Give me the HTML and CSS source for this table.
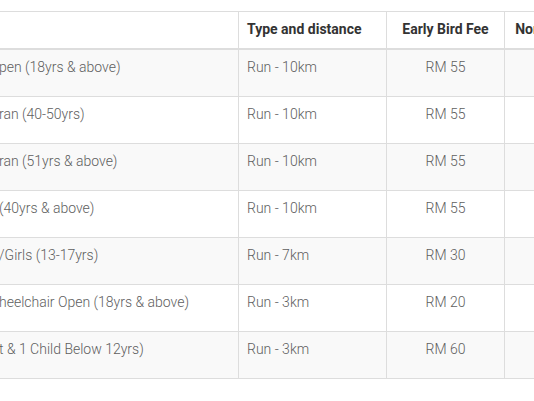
FILE: index.html
```html
<!DOCTYPE html>
<html>
<head>
<meta charset="utf-8">
<link rel="stylesheet" href="styles.css">
</head>
<body>
<div class="frame">
  <table class="fees">
    <colgroup>
      <col class="c-cat">
      <col class="c-type">
      <col class="c-early">
      <col class="c-normal">
    </colgroup>
    <thead>
      <tr>
        <th class="left">Category</th>
        <th class="left">Type and distance</th>
        <th>Early Bird Fee</th>
        <th>Normal Entry Fee</th>
      </tr>
    </thead>
    <tbody>
      <tr>
        <td class="cat"><span class="lead">Men O</span>pen (18yrs &amp; above)</td>
        <td>Run - 10km</td>
        <td class="mid">RM 55</td>
        <td class="mid">RM 65</td>
      </tr>
      <tr>
        <td class="cat"><span class="lead">Men Vete</span>ran (40-50yrs)</td>
        <td>Run - 10km</td>
        <td class="mid">RM 55</td>
        <td class="mid">RM 65</td>
      </tr>
      <tr>
        <td class="cat"><span class="lead">Senior Vete</span>ran (51yrs &amp; above)</td>
        <td>Run - 10km</td>
        <td class="mid">RM 55</td>
        <td class="mid">RM 65</td>
      </tr>
      <tr>
        <td class="cat"><span class="lead">Women Veteran</span>(40yrs &amp; above)</td>
        <td>Run - 10km</td>
        <td class="mid">RM 55</td>
        <td class="mid">RM 65</td>
      </tr>
      <tr>
        <td class="cat"><span class="lead">Junior Boys</span>/Girls (13-17yrs)</td>
        <td>Run - 7km</td>
        <td class="mid">RM 30</td>
        <td class="mid">RM 40</td>
      </tr>
      <tr>
        <td class="cat"><span class="lead">Men W</span>heelchair Open (18yrs &amp; above)</td>
        <td>Run - 3km</td>
        <td class="mid">RM 20</td>
        <td class="mid">RM 30</td>
      </tr>
      <tr>
        <td class="cat"><span class="lead">Family (1 Paren</span>t &amp; 1 Child Below 12yrs)</td>
        <td>Run - 3km</td>
        <td class="mid">RM 60</td>
        <td class="mid">RM 70</td>
      </tr>
    </tbody>
  </table>
</div>
</body>
</html>
```

FILE: styles.css
```css
html, body {
  margin: 0;
  padding: 0;
  background: #ffffff;
}

.frame {
  width: 534px;
  height: 401px;
  overflow: hidden;
  padding-top: 11px;
  box-sizing: border-box;
}

.fees {
  margin-left: -150px;
  border-collapse: collapse;
  table-layout: fixed;
  width: 784px;
  font-family: Roboto, "Liberation Sans", sans-serif;
  font-size: 14px;
  line-height: 20px;
  font-weight: 300;
  color: #5e5e5e;
}

.c-cat { width: 388px; }
.c-type { width: 148px; }
.c-early { width: 118px; }
.c-normal { width: 130px; }

.fees th,
.fees td {
  border: 1px solid #dddddd;
  white-space: nowrap;
  vertical-align: top;
}

.fees th {
  padding: 7px 8px 9px;
  font-weight: 700;
  color: #333333;
  text-align: center;
  border-bottom: 2px solid #dddddd;
}

.fees th.left {
  text-align: left;
}

.fees td {
  padding: 7px 8px 19px;
  text-align: left;
}

.fees td.mid {
  text-align: center;
}

.fees tbody tr:nth-child(odd) td {
  background: #f9f9f9;
}

.lead {
  display: inline-block;
  width: 140px;
  text-align: right;
}
```
